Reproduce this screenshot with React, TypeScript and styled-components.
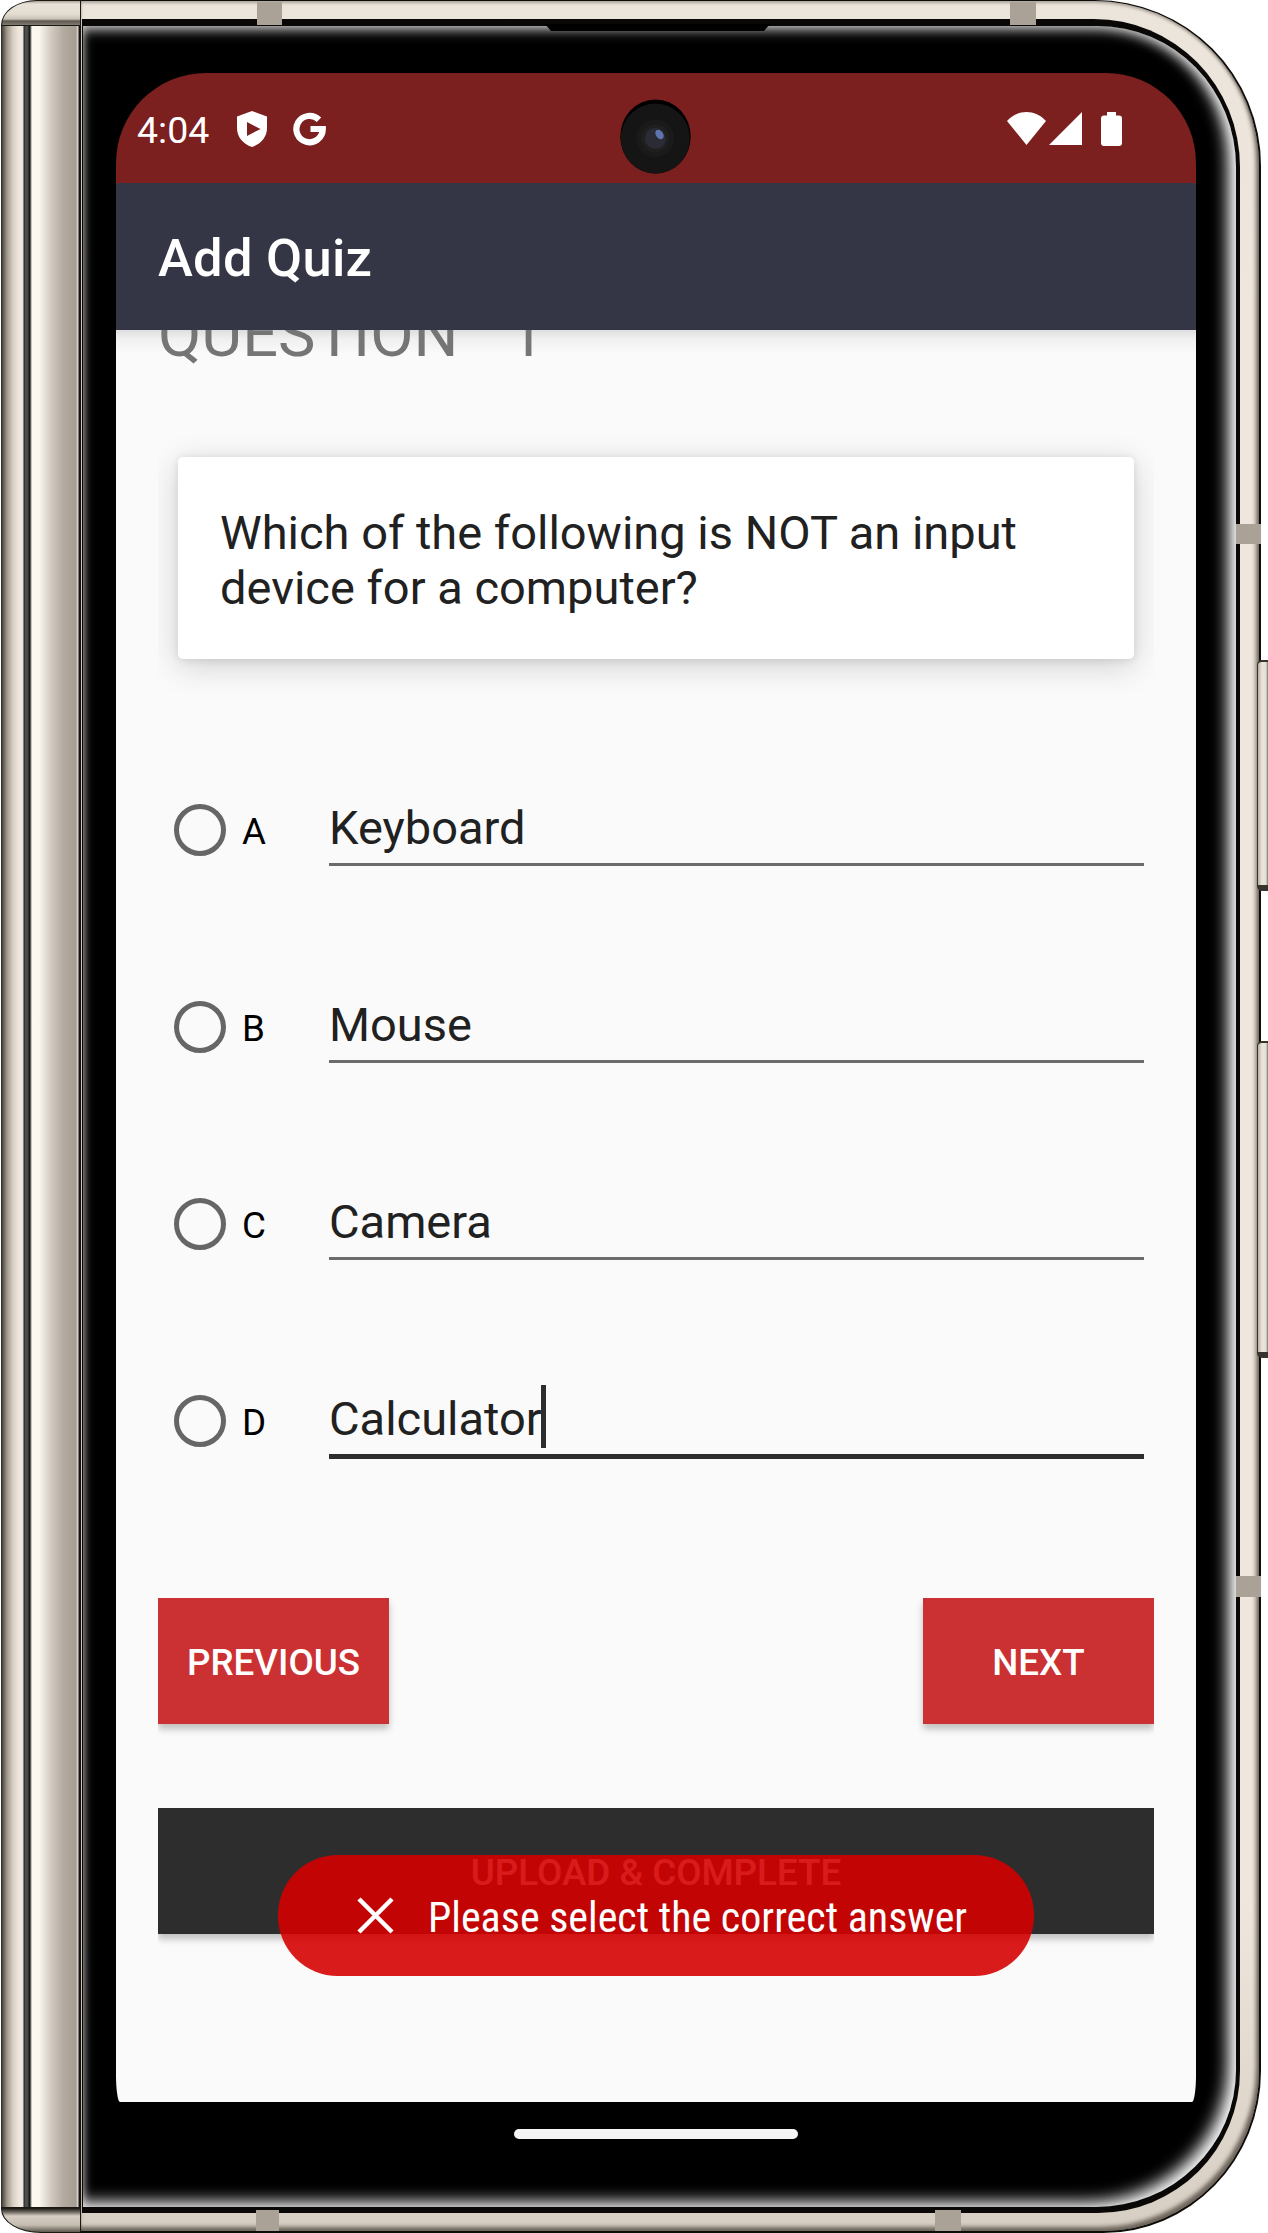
import React from "react";
import styled, { createGlobalStyle, css } from "styled-components";

const Global = createGlobalStyle`
  * { box-sizing: border-box; }
  body { margin: 0; background: #fff; font-family: Roboto, "Liberation Sans", sans-serif; }
  button { font: inherit; border: 0; margin: 0; padding: 0; }
`;

const Device = styled.div`
  position: relative;
  display: flex;
  width: 1268px;
  height: 2233px;
  overflow: hidden;
`;

const Hinge = styled.div`
  display: flex;
  flex-direction: column;
  width: 80px;
  margin-left: 1px;
  flex: none;
`;

const HingeCap = styled.div<{ $bottom?: boolean }>`
  flex: none;
  height: 26px;
  border: 1px solid #1b1814;
  ${(p) =>
    p.$bottom
      ? css`
          border-radius: 0 0 0 40px / 0 0 0 24px;
          background: linear-gradient(#15130f 0, #6e675e 4px, #d6cfc4 8px, #c5bdb0 17px, #4e4840 25px);
        `
      : css`
          border-radius: 36px 0 0 0 / 25px 0 0 0;
          background: linear-gradient(#a8a196 0, #e8e2d8 3px, #e4ddd2 13px, #c9c2b7 18px, #5c574f 20px, #8b857b 25px);
        `}
`;

const HingeBody = styled.div`
  flex: 1;
  background: linear-gradient(
    90deg,
    #2b2722 0,
    #5b544c 2px,
    #a0978c 6px,
    #d8cfc4 12px,
    #f0e8de 18px,
    #efe7dd 22px,
    #1c1c1b 23px,
    #4b4e4d 24px,
    #4b4e4d 27px,
    #10100f 28px,
    #262421 29px,
    #fdf9f1 31px,
    #fbf6ee 38px,
    #d3cbc1 50px,
    #b3aaa0 62px,
    #a69d93 75px,
    #e4ddd3 77px,
    #15130f 78px,
    #15130f 80px
  );
`;

const Frame = styled.div`
  width: 1180px;
  height: 2233px;
  flex: none;
  padding: 1px 2px 2px 0;
  border-radius: 0 166px 158px 0 / 0 166px 162px 0;
  background: #0f0d0a;
`;

const Metal = styled.div`
  height: 100%;
  padding: 18px 19px 18px 1px;
  border-radius: 0 165px 156px 0 / 0 165px 160px 0;
  background: linear-gradient(#ebe4db, #efe7dd 300px, #efe7dd 1900px, #d6cec2 2229px);
  box-shadow: inset -3px -4px 4px rgba(50, 42, 34, 0.65), inset 0 2px 3px rgba(80, 72, 62, 0.4);
`;

const Rim = styled.div`
  height: 100%;
  padding: 7px 4px 6px 1px;
  border-radius: 0 146px 142px 0 / 0 148px 142px 0;
  background: #090806;
`;

const Bezel = styled.div`
  height: 100%;
  padding: 47px 40px 0 33px;
  border-radius: 0 138px 140px 0 / 0 141px 137px 0;
  background: #000;
  box-shadow: inset -9px -6px 16px -1px #f8f8f8, inset 0 6px 13px -3px #c0c0c0, inset 3px 0 7px -2px #555;
`;

const Screen = styled.main`
  position: relative;
  display: flex;
  flex-direction: column;
  width: 1080px;
  height: 2092px;
`;

const StatusBar = styled.header`
  display: flex;
  align-items: center;
  flex: none;
  height: 110px;
  padding: 1px 74px 0 21px;
  border-radius: 90px 90px 0 0;
  background: #7b1f1f;
`;

const Clock = styled.span`
  width: 100px;
  padding-top: 3px;
  font-size: 37.5px;
  line-height: 44px;
  color: #fff;
`;

const StatusIcon = styled.svg<{ $gap?: number }>`
  display: block;
  flex: none;
  margin-left: ${(p) => p.$gap ?? 0}px;
  fill: #fff;
`;

const Spacer = styled.div`
  flex: 1;
`;

const CameraHole = styled.svg`
  position: absolute;
  left: 504px;
  top: 26px;
`;

const AppBar = styled.div`
  display: flex;
  align-items: center;
  flex: none;
  height: 147px;
  padding: 3px 42px 0;
  background: #343645;
`;

const Title = styled.h1`
  margin: 0;
  font-size: 52.5px;
  letter-spacing: 0.25px;
  font-weight: 500;
  color: #fff;
`;

const Content = styled.section`
  display: flex;
  flex-direction: column;
  height: 1772px;
  flex: none;
  padding: 0 42px;
  border-radius: 0 0 4px 4px / 0 0 27px 27px;
  overflow: hidden;
  background: linear-gradient(#dedede, #f0f0f0 9px, #fafafa 24px);
`;

const Heading = styled.h2`
  flex: none;
  margin: -32px 0 0;
  height: 74px;
  font-size: 63px;
  line-height: 74px;
  font-weight: 400;
  word-spacing: -3px;
  color: #757575;
  white-space: pre;
`;

const CardArea = styled.div`
  flex: none;
  margin-top: 45px;
  padding: 40px 20px;
  overflow: hidden;
`;

const Card = styled.div`
  height: 202px;
  padding: 48px 42px 0;
  border-radius: 5px;
  background: #fff;
  box-shadow: 0 7px 32px rgba(0, 0, 0, 0.17), 0 1px 8px rgba(0, 0, 0, 0.1);
  font-size: 47px;
  line-height: 55px;
  color: #212121;
  white-space: pre-line;
`;

const Options = styled.div`
  display: flex;
  flex-direction: column;
  flex: none;
  margin-top: 32px;
`;

const Option = styled.label`
  display: flex;
  align-items: center;
  height: 197px;
  padding: 0 10px 0 16px;
`;

const Radio = styled.span`
  width: 52px;
  height: 52px;
  margin-top: 1px;
  border: 5px solid #666;
  border-radius: 50%;
`;

const Letter = styled.span`
  width: 87px;
  margin-left: 16px;
  padding-top: 4px;
  font-size: 36.75px;
  line-height: 44px;
  color: #000;
`;

const Field = styled.span<{ $focused?: boolean }>`
  display: flex;
  align-items: center;
  flex: 1;
  height: ${(p) => (p.$focused ? 75 : 73)}px;
  margin-top: ${(p) => (p.$focused ? 2 : 0)}px;
  padding-bottom: 2px;
  border-bottom: ${(p) => (p.$focused ? "5px solid #2d2d2d" : "3px solid #6b6b6b")};
  font-size: 47px;
  line-height: 55px;
  color: #212121;
`;

const Caret = styled.span`
  width: 5px;
  height: 63px;
  margin: 0 0 3px -1px;
  background: #2d2d2d;
`;

const Actions = styled.div`
  display: flex;
  justify-content: space-between;
  flex: none;
  margin-top: 79px;
  height: 146px;
  overflow: hidden;
`;

const Button = styled.button<{ $dark?: boolean }>`
  width: ${(p) => (p.$dark ? "100%" : "231px")};
  height: 126px;
  padding-top: 3px;
  background: ${(p) => (p.$dark ? "#2d2d2d" : "#cb3132")};
  box-shadow: 0 5px 7px rgba(0, 0, 0, 0.24);
  font-size: 36.75px;
  font-weight: 500;
  color: #fff;
`;

const UploadRow = styled.div`
  flex: none;
  height: 146px;
  margin-top: 64px;
  overflow: hidden;
`;

const Toast = styled.div`
  position: absolute;
  left: 162px;
  top: 1782px;
  display: flex;
  align-items: center;
  width: 756px;
  height: 121px;
  padding-left: 79px;
  border-radius: 60px;
  background: rgba(213, 0, 0, 0.893);
`;

const ToastText = styled.span`
  margin-left: 34px;
  padding-top: 3px;
  font-family: "Roboto Condensed", Roboto, sans-serif;
  font-stretch: 75%;
  font-size: 42px;
  color: #fff;
  white-space: nowrap;
`;

const NavBar = styled.footer`
  display: flex;
  justify-content: center;
  align-items: flex-start;
  flex: 1;
  padding-top: 27px;
`;

const NavPill = styled.span`
  width: 284px;
  height: 10px;
  border-radius: 5px;
  background: #f4f4f4;
`;

const Antenna = styled.i<{ $x: number; $y: number; $w: number; $h: number }>`
  position: absolute;
  left: ${(p) => p.$x}px;
  top: ${(p) => p.$y}px;
  width: ${(p) => p.$w}px;
  height: ${(p) => p.$h}px;
  background: #aaa197;
`;

const SideKey = styled.i<{ $y: number; $h: number }>`
  position: absolute;
  left: 1257px;
  top: ${(p) => p.$y}px;
  width: 13px;
  height: ${(p) => p.$h}px;
  border: solid #38332c;
  border-width: 2px 1px 6px 1px;
  border-radius: 5px 0 0 5px;
  background: linear-gradient(90deg, #b5ada2, #ece5db 4px, #e6dfd5 8px, #77706a 10px);
`;

const Earpiece = styled.svg`
  position: absolute;
  left: 545px;
  top: 24px;
`;

const options = [
  { letter: "A", answer: "Keyboard" },
  { letter: "B", answer: "Mouse" },
  { letter: "C", answer: "Camera" },
  { letter: "D", answer: "Calculator", focused: true },
];

export default function App() {
  return (
    <>
      <Global />
      <Device>
        <Hinge>
          <HingeCap />
          <HingeBody />
          <HingeCap $bottom />
        </Hinge>
        <Frame>
          <Metal>
            <Rim>
              <Bezel>
                <Screen>
                  <StatusBar>
                    <Clock>4:04</Clock>
                    <StatusIcon width="30" height="36" viewBox="0 0 30 36">
                      <path
                        fillRule="evenodd"
                        d="M15 0 L30 5.500 V17 C30 26 24 33 15 36 C6 33 0 26 0 17 V5.500Z M10 11 V25 L23.500 18Z"
                      />
                    </StatusIcon>
                    <StatusIcon $gap={26} width="34" height="34" viewBox="0 0 34 34">
                      <path
                        d="M26 7.800 A13.200 13.200 0 1 0 29.800 17 H17.500"
                        fill="none"
                        stroke="#fff"
                        strokeWidth="6.200"
                      />
                    </StatusIcon>
                    <Spacer />
                    <StatusIcon width="39" height="33" viewBox="0 0 39 33">
                      <path d="M0 9 C11 -3 28 -3 39 9 L19.500 33Z" />
                    </StatusIcon>
                    <StatusIcon $gap={3} width="33" height="33" viewBox="0 0 33 33">
                      <path d="M33 0 V33 H0Z" />
                    </StatusIcon>
                    <StatusIcon $gap={19} width="21" height="34" viewBox="0 0 21 34">
                      <path d="M6 0 H15 V3.500 H18 Q21 3.500 21 6.500 V31 Q21 34 18 34 H3 Q0 34 0 31 V6.500 Q0 3.500 3 3.500 H6Z" />
                    </StatusIcon>
                  </StatusBar>
                  <AppBar>
                    <Title>Add Quiz</Title>
                  </AppBar>
                  <Content>
                    <Heading>{"QUESTION    1"}</Heading>
                    <CardArea>
                      <Card>{"Which of the following is NOT an input\ndevice for a computer?"}</Card>
                    </CardArea>
                    <Options>
                      {options.map((o) => (
                        <Option key={o.letter}>
                          <Radio />
                          <Letter>{o.letter}</Letter>
                          <Field $focused={o.focused}>
                            {o.answer}
                            {o.focused && <Caret />}
                          </Field>
                        </Option>
                      ))}
                    </Options>
                    <Actions>
                      <Button>PREVIOUS</Button>
                      <Button>NEXT</Button>
                    </Actions>
                    <UploadRow>
                      <Button $dark>UPLOAD &amp; COMPLETE</Button>
                    </UploadRow>
                  </Content>
                  <NavBar>
                    <NavPill />
                  </NavBar>
                  <Toast>
                    <svg width="37" height="37" viewBox="0 0 37 37">
                      <path d="M2 2 L35 35 M35 2 L2 35" stroke="#fff" strokeWidth="4.500" />
                    </svg>
                    <ToastText>Please select the correct answer</ToastText>
                  </Toast>
                  <CameraHole width="71" height="75" viewBox="0 0 71 75">
                    <ellipse cx="35.500" cy="37.500" rx="35.200" ry="37" fill="#000" />
                    <ellipse cx="35.300" cy="39.500" rx="34.500" ry="35" fill="#151515" />
                    <circle cx="35.300" cy="39.500" r="19" fill="#1a1a1a" />
                    <circle cx="35.300" cy="39.500" r="14" fill="#1f1f20" />
                    <circle cx="35.300" cy="39.500" r="10.500" fill="#2a2b35" />
                    <ellipse cx="39.500" cy="35.500" rx="3.600" ry="5.200" fill="#5f74ae" transform="rotate(-35 39.500 35.500)" />
                  </CameraHole>
                </Screen>
              </Bezel>
            </Rim>
          </Metal>
        </Frame>
        <Earpiece width="225" height="8" viewBox="0 0 225 8">
          <path d="M0 0 H225 L219 7 H6Z" fill="#000" />
        </Earpiece>
        <Antenna $x={257} $y={2} $w={25} $h={23} />
        <Antenna $x={1010} $y={2} $w={26} $h={23} />
        <Antenna $x={256} $y={2210} $w={23} $h={21} />
        <Antenna $x={935} $y={2210} $w={26} $h={21} />
        <Antenna $x={1236} $y={524} $w={25} $h={20} />
        <Antenna $x={1236} $y={1576} $w={25} $h={21} />
        <SideKey $y={660} $h={231} />
        <SideKey $y={1041} $h={317} />
      </Device>
    </>
  );
}
